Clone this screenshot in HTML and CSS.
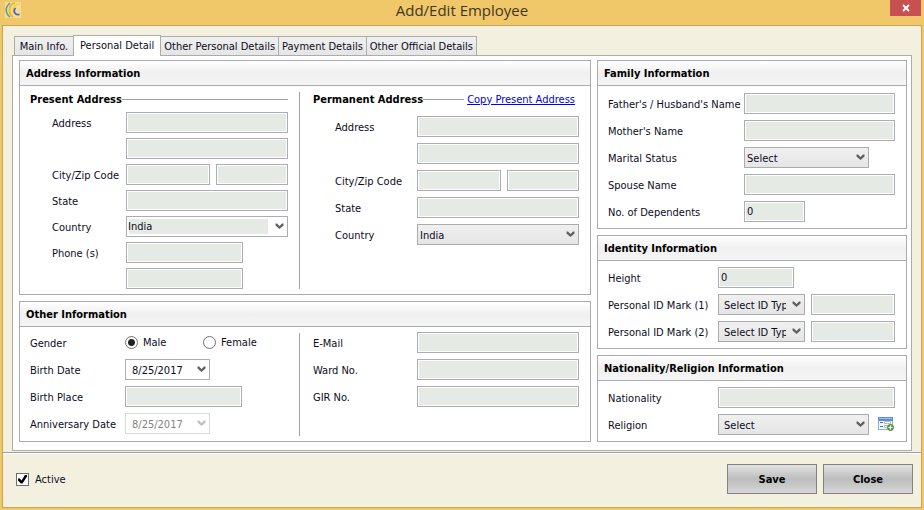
FILE: index.html
```html
<!DOCTYPE html>
<html lang="en">
<head>
<meta charset="utf-8">
<title>Add/Edit Employee</title>
<link rel="stylesheet" href="styles.css">
</head>
<body>
<svg class="sprite" aria-hidden="true">
  <symbol id="chevron" viewBox="0 0 8 7"><path d="M0 0.5h1.500l2.500 2.500 2.500-2.500h1.500v2l-4 3.500-4-3.500z"/></symbol>
</svg>
<header class="titlebar">
  <svg class="logo" viewBox="0 0 16 16" aria-hidden="true">
    <rect width="16" height="16" fill="#f1dc9a"/>
    <path d="M5 1C0 5 0 11 5 15" fill="none" stroke="#4f9fa6" stroke-width="1.6"/>
    <path d="M10 1C3 2 3 12 8 15" fill="none" stroke="#edbd20" stroke-width="2"/>
    <path d="M15 2C11 2 7 6 8 10" fill="none" stroke="#f3cf45" stroke-width="1.5"/>
    <path d="M10.500 6C7.500 9 10 13.500 14.500 12.500" fill="none" stroke="#4a62b4" stroke-width="1.6"/>
  </svg>
  <h1>Add/Edit Employee</h1>
  <button class="window-close" type="button" aria-label="Close window">
    <svg viewBox="0 0 8 8" aria-hidden="true"><path d="M1 1l6 6M7 1L1 7"/></svg>
  </button>
</header>
<form class="window">
  <main class="content">
    <nav class="tabs" role="tablist">
      <button class="tab" type="button" role="tab">Main Info.</button>
      <button class="tab active" type="button" role="tab" aria-selected="true">Personal Detail</button>
      <button class="tab" type="button" role="tab">Other Personal Details</button>
      <button class="tab" type="button" role="tab">Payment Details</button>
      <button class="tab" type="button" role="tab">Other Official Details</button>
    </nav>
    <div class="panel">
      <div class="column">
        <section class="group">
          <h2>Address Information</h2>
          <div class="split">
            <div class="side present">
              <h3>Present Address</h3>
              <div class="rows tight indent">
                <div class="row"><label for="pa1">Address</label><input id="pa1" type="text"></div>
                <div class="row"><span></span><input type="text" aria-label="Address line 2"></div>
                <div class="row"><label for="pcity">City/Zip Code</label><div class="pair"><input id="pcity" type="text"><input class="zip" type="text" aria-label="Zip code"></div></div>
                <div class="row"><label for="pstate">State</label><input id="pstate" type="text"></div>
                <div class="row"><label for="pcountry">Country</label><span class="select editable"><select id="pcountry"><option>India</option></select><svg><use href="#chevron"/></svg></span></div>
                <div class="row"><label for="phone1">Phone (s)</label><input class="medium" id="phone1" type="text"></div>
                <div class="row"><span></span><input class="medium" type="text" aria-label="Phone 2"></div>
              </div>
            </div>
            <div class="divider"></div>
            <div class="side permanent">
              <h3>Permanent Address <a href="#copy">Copy Present Address</a></h3>
              <div class="rows indent">
                <div class="row"><label for="ra1">Address</label><input id="ra1" type="text"></div>
                <div class="row"><span></span><input type="text" aria-label="Address line 2"></div>
                <div class="row"><label for="rcity">City/Zip Code</label><div class="pair"><input id="rcity" type="text"><input class="zip" type="text" aria-label="Zip code"></div></div>
                <div class="row"><label for="rstate">State</label><input id="rstate" type="text"></div>
                <div class="row"><label for="rcountry">Country</label><span class="select"><select id="rcountry"><option>India</option></select><svg><use href="#chevron"/></svg></span></div>
              </div>
            </div>
          </div>
        </section>
        <section class="group">
          <h2>Other Information</h2>
          <div class="split other">
            <div class="side present">
              <div class="rows">
                <div class="row"><span class="caption">Gender</span><div class="radios"><label><input type="radio" name="gender" checked>Male</label><label><input type="radio" name="gender">Female</label></div></div>
                <div class="row"><label for="bdate">Birth Date</label><span class="select date"><select id="bdate"><option>8/25/2017</option></select><svg><use href="#chevron"/></svg></span></div>
                <div class="row"><label for="bplace">Birth Place</label><input class="medium" id="bplace" type="text"></div>
                <div class="row"><label for="adate">Anniversary Date</label><span class="select date"><select id="adate" disabled><option>8/25/2017</option></select><svg><use href="#chevron"/></svg></span></div>
              </div>
            </div>
            <div class="divider"></div>
            <div class="side permanent">
              <div class="rows">
                <div class="row"><label for="email">E-Mail</label><input id="email" type="text"></div>
                <div class="row"><label for="ward">Ward No.</label><input id="ward" type="text"></div>
                <div class="row"><label for="gir">GIR No.</label><input id="gir" type="text"></div>
              </div>
            </div>
          </div>
        </section>
      </div>
      <div class="column">
        <section class="group family">
          <h2>Family Information</h2>
          <div class="rows">
            <div class="row"><label for="father">Father's / Husband's Name</label><input id="father" type="text"></div>
            <div class="row"><label for="mother">Mother's Name</label><input id="mother" type="text"></div>
            <div class="row"><label for="marital">Marital Status</label><span class="select marital"><select id="marital"><option>Select</option></select><svg><use href="#chevron"/></svg></span></div>
            <div class="row"><label for="spouse">Spouse Name</label><input id="spouse" type="text"></div>
            <div class="row"><label for="deps">No. of Dependents</label><input class="tiny" id="deps" type="text" value="0"></div>
          </div>
        </section>
        <section class="group details">
          <h2>Identity Information</h2>
          <div class="rows">
            <div class="row"><label for="height">Height</label><input class="small" id="height" type="text" value="0"></div>
            <div class="row"><label for="id1">Personal ID Mark (1)</label><div class="pair"><span class="select idtype"><select id="id1"><option>Select ID Type</option></select><svg><use href="#chevron"/></svg></span><input type="text" aria-label="ID 1 number"></div></div>
            <div class="row"><label for="id2">Personal ID Mark (2)</label><div class="pair"><span class="select idtype"><select id="id2"><option>Select ID Type</option></select><svg><use href="#chevron"/></svg></span><input type="text" aria-label="ID 2 number"></div></div>
          </div>
        </section>
        <section class="group details">
          <h2>Nationality/Religion Information</h2>
          <div class="rows">
            <div class="row"><label for="nation">Nationality</label><input id="nation" type="text"></div>
            <div class="row"><label for="religion">Religion</label><div class="pair wide"><span class="select"><select id="religion"><option>Select</option></select><svg><use href="#chevron"/></svg></span>
              <button class="add" type="button" aria-label="Add religion">
                <svg viewBox="0 0 17 16" aria-hidden="true">
                  <rect x="0.500" y="1.500" width="14" height="12" fill="#f4f8fd" stroke="#8fb0dc"/>
                  <path d="M0 1h15v4H0z" fill="#5b8fd6"/><path d="M1 2h13v1H1z" fill="#9cc0ee"/>
                  <path d="M2 6h3v1H2zM2 10h3v1H2z" fill="#3f6fc0"/>
                  <path d="M6.500 5.500h6v2h-6zM6.500 9.500h6v2h-6z" fill="#fff" stroke="#bcbcbc"/>
                  <circle cx="12.500" cy="11.500" r="3" fill="#62a843" stroke="#4b8a35"/>
                  <path d="M12 9.500h1v1.500h1.500v1H13v1.500h-1V12h-1.500v-1H12z" fill="#fff"/>
                </svg>
              </button></div></div>
          </div>
        </section>
      </div>
    </div>
  </main>
  <footer class="footer">
    <label class="active-check"><input type="checkbox" checked>Active</label>
    <button class="action" type="submit">Save</button>
    <button class="action" type="button">Close</button>
  </footer>
</form>
</body>
</html>
```
FILE: styles.css
```css
* { box-sizing: border-box; }

body {
  margin: 0;
  min-height: 100vh;
  display: flex;
  flex-direction: column;
  padding: 0 2px 2px;
  background: #f0c769;
  color: #0c0c1c;
  font: 11px/13px "DejaVu Sans Condensed", "DejaVu Sans", sans-serif;
}

button, input, select { font: inherit; color: inherit; margin: 0; }
.sprite { display: none; }

.titlebar {
  display: grid;
  grid-template-columns: 32px 1fr 32px;
  height: 25px;
}
.logo { width: 16px; height: 16px; margin: 2px 3px; }
.titlebar h1 {
  margin: 0;
  text-align: center;
  font: 15px/20px "Open Sans", sans-serif;
  color: #403626;
}
.window-close {
  height: 16px;
  margin-right: 1px;
  padding: 0;
  border: 0;
  background: #c75050;
  display: grid;
  place-items: center;
}
.window-close svg { width: 8px; height: 8px; }
.window-close path { stroke: #fff; stroke-width: 1.8; }

.window {
  flex: 1;
  display: flex;
  flex-direction: column;
  border: 1px solid #c9a555;
  background: #f4f0e0;
}
.content { padding: 9px 9px 1px; }

.tabs { display: flex; align-items: flex-end; padding-left: 2px; }
.tab {
  height: 19px;
  min-width: 60px;
  padding: 1px 3px 0;
  margin-right: -1px;
  border: 1px solid #acacac;
  border-bottom: 0;
  background: linear-gradient(#f0f0f0, #e5e5e5);
  white-space: nowrap;
}
.tab.active {
  position: relative;
  height: 21px;
  margin-bottom: -1px;
  padding: 0 6px 1px;
  background: #fff;
}

.panel {
  display: grid;
  grid-template-columns: minmax(0, 1fr) 310px;
  gap: 6px;
  padding: 4px 4px 8px 6px;
  border: 1px solid #acacac;
  background: #fff;
}
.column { display: flex; flex-direction: column; gap: 6px; }
.group { border: 1px solid #aaabaf; }
.group h2 {
  margin: 0;
  padding: 2px 6px 0;
  border-bottom: 1px solid #aaabaf;
  background: linear-gradient(#fff, #f0f0f0 50%, #f5f5f5);
  font-size: 11px;
  line-height: 22px;
  color: #000;
}

.split { display: grid; grid-template-columns: 279fr 1px 290fr; }
.divider { margin: 6px 0 5px; background: #a0a0a0; }
.side { padding: 0 11px 5px 10px; }
.permanent { padding-left: 13px; }
.side h3 {
  display: flex;
  align-items: center;
  height: 26px;
  margin: 0;
  font-size: 11px;
  color: #000;
}
.side h3::after { content: ""; flex: 1; height: 1px; background: #a0a0a0; }
.permanent h3 { margin-bottom: 4px; padding-right: 4px; }
.permanent h3::after { order: 1; margin-right: 3px; }
.permanent h3 a { order: 2; font-weight: normal; color: #0000f0; }

.rows { display: grid; gap: 6px; }
.rows.tight { gap: 5px; }
.row { display: grid; grid-template-columns: 95px minmax(0, 1fr); align-items: center; height: 21px; }
.row > label, .caption { padding-top: 2px; white-space: nowrap; }
.permanent .row { grid-template-columns: 104px minmax(0, 1fr); }
.indent { padding-left: 22px; }
.present .indent .row { grid-template-columns: 74px minmax(0, 1fr); }
.permanent .indent .row { grid-template-columns: 82px minmax(0, 1fr); }
.other .side { padding-top: 5px; padding-bottom: 7px; }
.family .rows { padding: 7px 11px 6px 10px; }
.family .row { grid-template-columns: 136px minmax(0, 1fr); }
.details .rows { padding: 6px 11px 6px 10px; }
.details .row { grid-template-columns: 110px minmax(0, 1fr); }

input[type="text"] {
  width: 100%;
  min-width: 0;
  height: 21px;
  padding: 0 2px 1px;
  border: 1px solid #abadb3;
  background: #e5eae5;
  box-shadow: inset 0 0 0 1px #fff;
}
input.medium { width: 117px; }
input.small { width: 76px; }
input.tiny { width: 61px; }
.pair { display: grid; grid-template-columns: minmax(0, 1fr) 72px; gap: 6px; }
.details .pair { grid-template-columns: 87px minmax(0, 1fr); }
.details .pair.wide { grid-template-columns: minmax(0, 1fr) 17px; gap: 9px; }

.select { position: relative; display: block; }
.select select {
  display: block;
  width: 100%;
  height: 21px;
  padding: 1px 16px 0 2px;
  appearance: none;
  border: 1px solid #acacac;
  border-radius: 0;
  background: linear-gradient(#f0f0f0, #e5e5e5);
  opacity: 1;
}
.select svg {
  position: absolute;
  top: 7px;
  right: 4px;
  width: 9px;
  height: 7px;
  fill: #606060;
  pointer-events: none;
}
.select.editable select {
  padding: 0 20px 1px 1px;
  border-color: #abadb3;
  background: linear-gradient(#e5eae5, #e5eae5) 2px 2px / calc(100% - 21px) 15px no-repeat #fff;
}
.select.date { width: 85px; }
.select.date select { padding-left: 6px; background: #fff; }
.select.date select:disabled { border-color: #d9d9d9; color: #838383; }
.select.date select:disabled + svg { fill: #bfbfbf; }
.select.marital { width: 125px; }
.details .select select { padding-left: 5px; }
.details .idtype select { padding-right: 18px; text-overflow: clip; }

.radios { display: grid; grid-template-columns: 78px 1fr; }
.radios label { display: flex; align-items: center; gap: 5px; }
input[type="radio"] {
  appearance: none;
  width: 13px;
  height: 13px;
  border: 1px solid #707070;
  border-radius: 50%;
  background: #fff;
}
input[type="radio"]:checked { background: radial-gradient(circle, #212121 0 3px, #fff 4px); }

.add { width: 17px; height: 16px; margin-top: 2px; padding: 0; border: 0; background: none; }
.add svg { display: block; width: 17px; height: 16px; }

.footer {
  flex: 1;
  display: flex;
  align-items: center;
  gap: 6px;
  padding: 0 8px 2px 13px;
  border-top: 1px solid #a0a0a0;
  box-shadow: inset 0 1px #fff;
}
.active-check { display: flex; align-items: center; gap: 6px; margin-right: auto; }
input[type="checkbox"] {
  appearance: none;
  display: grid;
  place-items: center;
  width: 13px;
  height: 13px;
  border: 1px solid #707070;
  background: #fff;
}
input[type="checkbox"]:checked::before {
  content: "";
  width: 9px;
  height: 9px;
  background: #000;
  clip-path: polygon(0 45%, 20% 45%, 40% 66%, 80% 0, 100% 0, 100% 22%, 50% 100%, 32% 100%, 0 66%);
}
.action {
  width: 90px;
  height: 30px;
  padding: 0;
  border: 1px solid #828282;
  background: linear-gradient(#e2e2e2, #bdbdbd 50%, #d6d6d6);
  font-weight: bold;
  color: #000;
}
```
